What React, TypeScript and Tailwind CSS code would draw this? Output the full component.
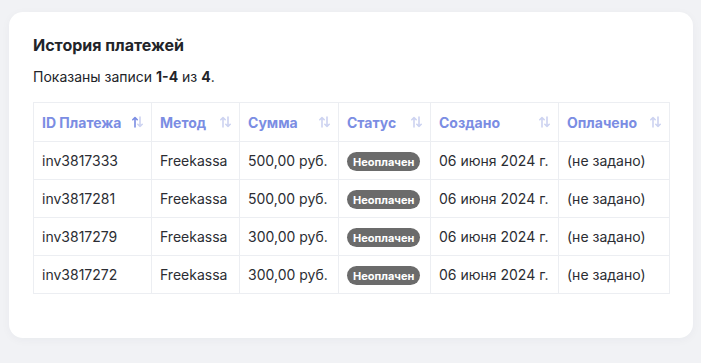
import React from 'react';

type Row = { id: string; method: string; sum: string; created: string; paid: string };

const rows: Row[] = [
  { id: 'inv3817333', method: 'Freekassa', sum: '500,00 руб.', created: '06 июня 2024 г.', paid: '(не задано)' },
  { id: 'inv3817281', method: 'Freekassa', sum: '500,00 руб.', created: '06 июня 2024 г.', paid: '(не задано)' },
  { id: 'inv3817279', method: 'Freekassa', sum: '300,00 руб.', created: '06 июня 2024 г.', paid: '(не задано)' },
  { id: 'inv3817272', method: 'Freekassa', sum: '300,00 руб.', created: '06 июня 2024 г.', paid: '(не задано)' },
];

const columns = [
  { title: 'ID Платежа', width: 'w-[118px]', active: true },
  { title: 'Метод', width: 'w-[88px]', active: false },
  { title: 'Сумма', width: 'w-[99px]', active: false },
  { title: 'Статус', width: 'w-[92px]', active: false },
  { title: 'Создано', width: 'w-[128px]', active: false },
  { title: 'Оплачено', width: 'w-[111px]', active: false },
];

const SortIcon: React.FC<{ active: boolean }> = ({ active }) => (
  <svg width="11" height="12" viewBox="0 0 11 12" fill="none" strokeWidth="1.6" strokeLinecap="round" strokeLinejoin="round" className="shrink-0">
    <g stroke={active ? '#7b8de3' : '#cdd3f1'}>
      <path d="M3 11V1.5M0.8 3.7L3 1.5l2.2 2.2" />
    </g>
    <g stroke="#cdd3f1">
      <path d="M8 1v9.5M5.8 8.3L8 10.5l2.2-2.2" />
    </g>
  </svg>
);

const cell = 'border border-[#eceef2] px-2 whitespace-nowrap overflow-hidden';

const App: React.FC = () => {
  return (
    <div className="min-h-screen bg-[#f1f2f5] pt-3 pl-[9px] pr-2 font-['Inter',sans-serif]">
      <div className="w-[684px] bg-white rounded-[14px] shadow-[0_2px_10px_rgba(30,40,80,0.04)] px-6 pt-6 pb-11">
        <h2 className="text-[16px] font-bold text-[#222429] leading-5 -mt-px">История платежей</h2>
        <p className="mt-3 text-[14px] text-[#222429] leading-5">
          Показаны записи <b className="font-bold">1-4</b> из <b className="font-bold">4</b>.
        </p>
        <table className="mt-[15px] border-collapse table-fixed w-[636px] text-[14px] text-[#2b2d33]">
          <thead>
            <tr className="h-[39px]">
              {columns.map((c) => (
                <th key={c.title} className={`${c.width} ${cell} text-left font-bold text-[#7b8de3]`}>
                  <div className="flex items-center justify-between gap-1">
                    <span>{c.title}</span>
                    <SortIcon active={c.active} />
                  </div>
                </th>
              ))}
            </tr>
          </thead>
          <tbody>
            {rows.map((r) => (
              <tr key={r.id} className="h-[38px]">
                <td className={cell}>{r.id}</td>
                <td className={cell}>{r.method}</td>
                <td className={cell}>{r.sum}</td>
                <td className={cell}>
                  <span className="inline-flex items-center h-[19px] px-[6px] rounded-full bg-[#6b6b6b] text-white text-[11px] font-bold">
                    Неоплачен
                  </span>
                </td>
                <td className={cell}>{r.created}</td>
                <td className={cell}>{r.paid}</td>
              </tr>
            ))}
          </tbody>
        </table>
      </div>
    </div>
  );
};

export default App;
